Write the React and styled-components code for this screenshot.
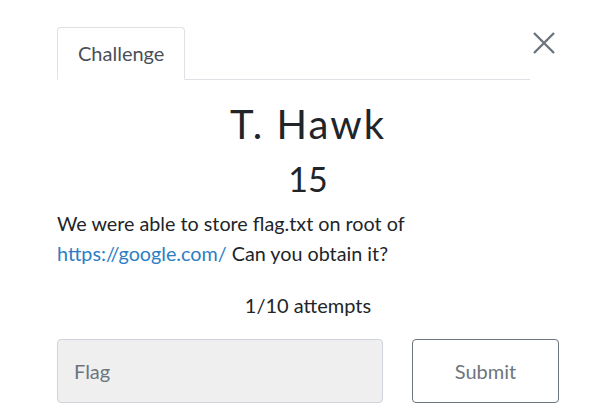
import React from 'react';
import styled, { createGlobalStyle } from 'styled-components';

const GlobalStyle = createGlobalStyle`
  body {
    margin: 0;
    background: #fff;
    font-family: Lato, "Open Sans", sans-serif;
    color: #212529;
  }
`;

const Modal = styled.div`
  width: 502px;
  padding: 27px 0 0 57px;
`;

const Header = styled.div`
  display: flex;
  align-items: flex-start;
`;

const Tabs = styled.div`
  display: flex;
  width: 473px;
  border-bottom: 1px solid #dee2e6;
`;

const Tab = styled.div`
  padding: 13px 20px 14px;
  margin-bottom: -1px;
  font-size: 20px;
  line-height: 24px;
  color: #495057;
  border: 1px solid #dee2e6;
  border-bottom-color: #fff;
  border-radius: 4px 4px 0 0;
  background: #fff;
`;

const Close = styled.button`
  margin: 5px 4px 0 auto;
  padding: 0;
  border: 0;
  background: none;
  width: 22px;
  height: 22px;
  cursor: pointer;
`;

const Title = styled.h2`
  margin: 20px 0 0;
  text-align: center;
  font-size: 40px;
  font-weight: 400;
  line-height: 48px;
  letter-spacing: 2px;
`;

const Value = styled.h4`
  margin: 9px 0 0;
  text-align: center;
  font-size: 34px;
  font-weight: 400;
  line-height: 44px;
`;

const Description = styled.p`
  margin: 8px 0 0;
  font-size: 19.75px;
  line-height: 30px;
  a {
    color: #2c7ec4;
    text-decoration: none;
  }
`;

const Attempts = styled.p`
  margin: 24px 0 0;
  text-align: center;
  font-size: 20px;
  line-height: 24px;
`;

const SubmitRow = styled.form`
  display: grid;
  grid-template-columns: 326px 147px;
  justify-content: space-between;
  margin-top: 22px;
`;

const FlagInput = styled.input`
  box-sizing: border-box;
  height: 64px;
  padding: 0 16px;
  font-family: inherit;
  font-size: 20px;
  color: #495057;
  background: #efefef;
  border: 1px solid #ced4da;
  border-radius: 4px;
  &::placeholder {
    color: #6c757d;
  }
`;

const SubmitButton = styled.button`
  box-sizing: border-box;
  height: 64px;
  font-family: inherit;
  font-size: 20px;
  color: #6c757d;
  background: #fff;
  border: 1px solid #6c757d;
  border-radius: 4px;
`;

export default function App() {
  return (
    <>
      <GlobalStyle />
      <Modal>
        <Header>
          <Tabs>
            <Tab>Challenge</Tab>
          </Tabs>
          <Close aria-label="Close">
            <svg width="22" height="22" viewBox="0 0 22 22">
              <path d="M1 1 L21 21 M21 1 L1 21" stroke="#6c757d" strokeWidth="2.4" />
            </svg>
          </Close>
        </Header>
        <Title>T. Hawk</Title>
        <Value>15</Value>
        <Description>
          We were able to store flag.txt on root of{' '}
          <a href="#">https://google.com/</a> Can you obtain it?
        </Description>
        <Attempts>1/10 attempts</Attempts>
        <SubmitRow onSubmit={(e) => e.preventDefault()}>
          <FlagInput placeholder="Flag" />
          <SubmitButton type="submit">Submit</SubmitButton>
        </SubmitRow>
      </Modal>
    </>
  );
}
